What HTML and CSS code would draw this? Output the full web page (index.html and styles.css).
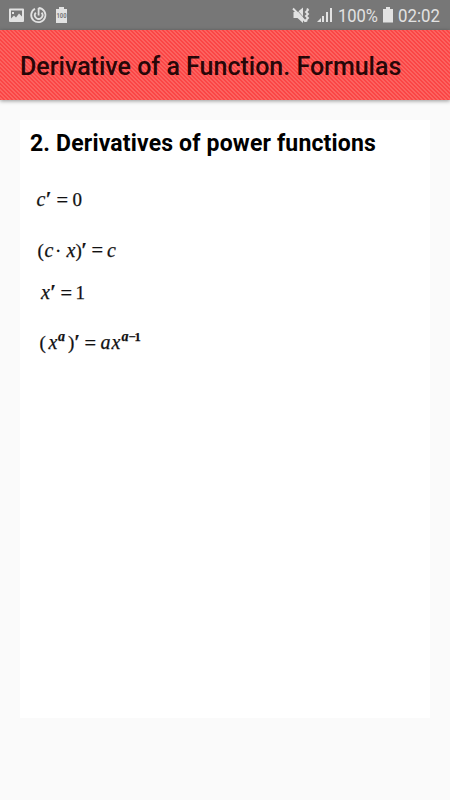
FILE: index.html
```html
<!DOCTYPE html>
<html lang="en">
<head>
<meta charset="utf-8">
<title>Derivative of a Function. Formulas</title>
<link rel="stylesheet" href="styles.css">
</head>
<body>
<div class="status">
  <svg class="status-icons" width="70" height="30" viewBox="0 0 70 30" fill="#e2e2e2">
    <path fill-rule="evenodd" d="M10 8.500h13q1 0 1 1V21q0 1-1 1H10q-1 0-1-1V9.500q0-1 1-1zm1 2v8l3-3 2 2 3-4 3 3v-6zM12 12h2v2h-2z"/>
    <g fill="none" stroke="#e2e2e2" stroke-width="1.8"><path d="M35 8.800A7.100 7.100 0 1 0 38.600 8M35.800 12.600a3.800 3.800 0 1 0 5.800 0M38.600 8v7.500"/></g>
    <path d="M59 7h5v2h3v14H56V9h3z"/>
    <text class="charge" x="56.500" y="18" textLength="10" lengthAdjust="spacingAndGlyphs">100</text>
  </svg>
  <div class="status-right">
    <svg width="42" height="30" viewBox="0 0 42 30" fill="#e2e2e2">
      <path d="M1.500 12h4l5.500-4.500v15.500l-5.500-5h-4z"/>
      <path d="M2.500 7.200l11 12.500" fill="none" stroke="#777" stroke-width=".8"/>
      <path d="M1 8.500l12.500 13M15 8.500l1 1.500-2 2 2 2-2 2 2 2-2 2 1 1.500" fill="none" stroke="#e2e2e2" stroke-width="1.9"/>
      <path d="M25 22l4-4v4zM30 16h2v6h-2zM34 12h2v10h-2zM38 8h2v14h-2z"/>
    </svg>
    <span class="percent">100%</span>
    <svg class="battery" width="10" height="30" viewBox="0 0 10 30" fill="#e2e2e2"><path d="M3 7h4v2h3v13.500H0V9h3z"/></svg>
    <span class="clock">02:02</span>
  </div>
</div>
<header class="bar"><h1>Derivative of a Function. Formulas</h1></header>
<main class="card">
  <h2>2. Derivatives of power functions</h2>
  <svg class="formulas" width="150" height="190" viewBox="20 180 150 190">
    <g class="math">
      <text y="206"><tspan class="v" x="36.500">c</tspan><tspan class="p" x="45.500">′</tspan><tspan class="n" x="72.500">0</tspan></text>
      <text y="257"><tspan class="n" x="37.500">(</tspan><tspan class="v" x="44.500">c</tspan><tspan class="n" x="55">·</tspan><tspan class="v" x="66.500">x</tspan><tspan class="n" x="75.500">)</tspan><tspan class="p" x="81">′</tspan><tspan class="v" x="107">c</tspan></text>
      <text y="299"><tspan class="v" x="41">x</tspan><tspan class="p" x="50">′</tspan><tspan class="n" x="75.500">1</tspan></text>
      <text y="349"><tspan class="n" x="39.500">(</tspan><tspan class="v" x="48.500">x</tspan><tspan class="s" x="58" dy="-8">a</tspan><tspan class="n" x="68" dy="8">)</tspan><tspan class="p" x="74">′</tspan><tspan class="v" x="100.500">a</tspan><tspan class="v" x="111.500">x</tspan><tspan class="s" x="121.500" dy="-8">a</tspan><tspan class="t" x="128.500">−</tspan><tspan class="t" x="134.500">1</tspan></text>
      <text class="eq"><tspan x="56.500" y="207">=</tspan><tspan x="91.500" y="257">=</tspan><tspan x="60.500" y="300">=</tspan><tspan x="84.500" y="350">=</tspan></text>
    </g>
  </svg>
</main>
</body>
</html>
```
FILE: styles.css
```css
* { box-sizing: border-box; }
body { margin: 0; height: 800px; overflow: hidden; background: #fafafa; font-family: Roboto, sans-serif; }
.status { display: flex; justify-content: space-between; height: 30px; background: #777; color: #e2e2e2; }
.status svg { display: block; flex: none; }
.charge { font: 700 6.5px Roboto, sans-serif; fill: #777; }
.status-right { display: flex; width: 158px; font-size: 19px; line-height: 32px; white-space: nowrap; }
.percent { width: 41px; padding-left: 4px; transform: scaleX(.87); transform-origin: 4px 50%; }
.battery { margin-left: 8px; }
.clock { margin-left: 5px; transform: scaleX(.885); transform-origin: left; }
.bar {
  height: 70px;
  padding-left: 20px;
  background: repeating-linear-gradient(45deg, #fb4545 0, #fb4545 1.414px, #fc6360 1.414px, #fc6360 2.828px);
  box-shadow: 0 1px 4px rgba(0, 0, 0, .4);
}
h1 { margin: 0; color: #270708; font-size: 25px; font-weight: 500; line-height: 73px; white-space: nowrap; }
.card { width: 410px; height: 598px; margin: 20px 0 0 20px; background: #fff; }
h2 { margin: 0; padding: 9px 0 0 10px; font-size: 23px; font-weight: 700; line-height: 30px; letter-spacing: .17px; white-space: nowrap; color: #000; }
.formulas { display: block; margin-top: 21px; }
.math { font-family: "Liberation Serif", serif; fill: #111; stroke: #111; stroke-width: .25px; }
.v { font-size: 20px; font-style: italic; }
.n { font-size: 19px; }
.eq { font-size: 20.5px; }
.p { font-size: 20px; font-weight: 700; font-style: italic; }
.s { font-size: 14px; font-style: italic; font-weight: 700; }
.t { font-size: 12.5px; font-weight: 700; }
```
